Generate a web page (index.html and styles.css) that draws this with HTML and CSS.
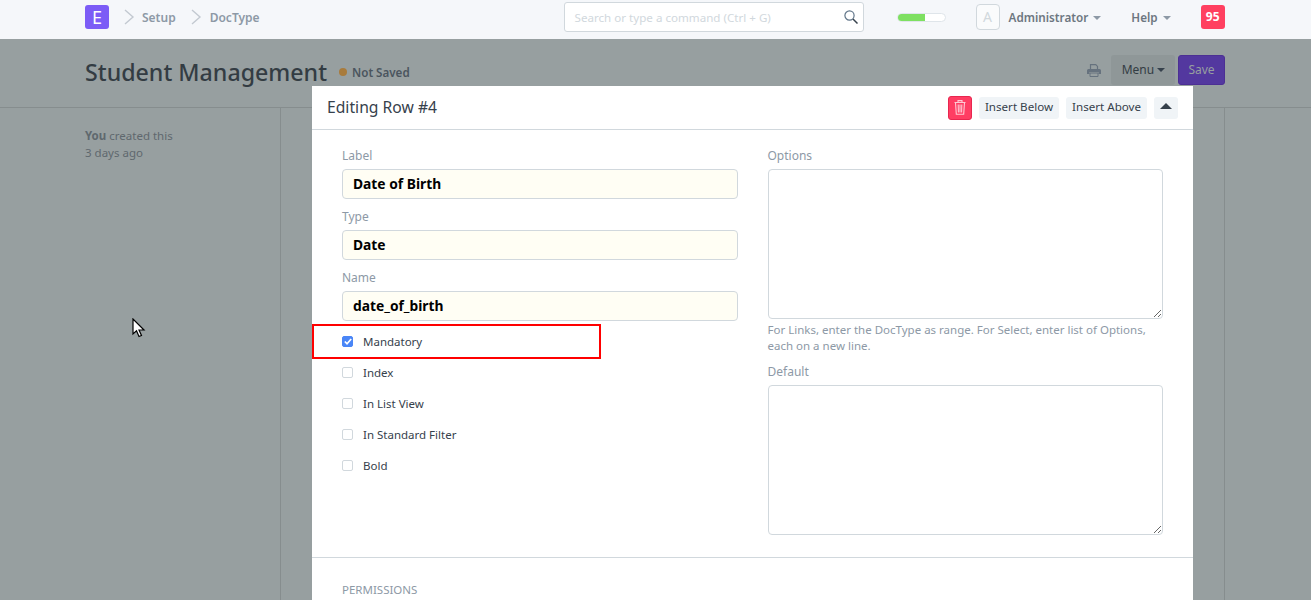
FILE: index.html
```html
<!DOCTYPE html>
<html lang="en">
<head>
  <meta charset="UTF-8">
  <title>Student Management</title>
  <link rel="stylesheet" href="styles.css">
</head>
<body>

<header class="navbar">
  <div class="logo">E</div>
  <svg class="crumb-arrow" width="12" height="16" viewBox="0 0 12 16"><path d="M2 1l8 7-8 7" fill="none" stroke="#c3c9d1" stroke-width="1.4"/></svg>
  <a class="crumb">Setup</a>
  <svg class="crumb-arrow" width="12" height="16" viewBox="0 0 12 16"><path d="M2 1l8 7-8 7" fill="none" stroke="#c3c9d1" stroke-width="1.4"/></svg>
  <a class="crumb crumb-last">DocType</a>

  <div class="search">
    <span class="search-text">Search or type a command (Ctrl + G)</span>
    <svg width="14" height="14" viewBox="0 0 14 14"><circle cx="5.500" cy="5.500" r="4.600" fill="none" stroke="#5f7488" stroke-width="1.200"/><path d="M9 9l4.500 4.500" stroke="#36414c" stroke-width="1.500"/></svg>
  </div>

  <div class="progress"><div class="progress-fill"></div></div>
  <div class="avatar">A</div>
  <a class="nav-link nav-admin">Administrator <span class="caret"></span></a>
  <a class="nav-link nav-help">Help <span class="caret"></span></a>
  <div class="badge">95</div>
</header>

<div class="page-head">
  <h1>Student Management</h1>
  <span class="dot"></span>
  <span class="status">Not Saved</span>
  <div class="page-actions">
    <svg width="14" height="13" viewBox="0 0 14 13"><path d="M3.500 5V.7h5.300l1.700 1.700V5" fill="none" stroke="#66727e" stroke-width="1.200"/><path d="M1.500 5h11A1.500 1.500 0 0 1 14 6.500V10h-2.500V8h-9v2H0V6.500A1.500 1.500 0 0 1 1.500 5z" fill="#66727e"/><path d="M3 9h8v3.500H3z" fill="none" stroke="#66727e" stroke-width="1"/></svg>
    <button class="btn-menu">Menu <span class="caret caret-dark"></span></button>
    <button class="btn-save">Save</button>
  </div>
</div>

<div class="page-body">
  <aside class="sidebar">
    <p><b>You</b> created this</p>
    <p>3 days ago</p>
  </aside>
  <div class="layout-main"></div>
</div>

<div class="modal">
  <div class="modal-head">
    <h4>Editing Row #4</h4>
    <button class="btn-delete">
      <svg width="12" height="15" viewBox="0 0 12 15"><path d="M4 2V.6h4V2 M.5 2.500h11 M1.500 2.500l.8 11.800h7.400l.8-11.800 M4.200 4.500l.2 8 M6 4.500v8 M7.800 4.500l-.2 8" fill="none" stroke="#ffc9d4" stroke-width="1.100"/></svg>
    </button>
    <button class="btn-light">Insert Below</button>
    <button class="btn-light">Insert Above</button>
    <button class="btn-light btn-up"><span class="caret-up"></span></button>
  </div>

  <div class="form-columns">
    <div class="form-col">
      <label class="field-label">Label</label>
      <input class="field-input" type="text" value="Date of Birth">
      <label class="field-label">Type</label>
      <input class="field-input" type="text" value="Date">
      <label class="field-label">Name</label>
      <input class="field-input" type="text" value="date_of_birth">

      <div class="checks">
        <div class="check">
          <span class="box box-on"><svg width="8" height="7" viewBox="0 0 8 7"><path d="M.8 3.500l2.200 2.200L7.200 1" fill="none" stroke="#fff" stroke-width="1.700"/></svg></span>
          Mandatory
        </div>
        <div class="check"><span class="box"></span>Index</div>
        <div class="check"><span class="box"></span>In List View</div>
        <div class="check"><span class="box"></span>In Standard Filter</div>
        <div class="check"><span class="box"></span>Bold</div>
      </div>
    </div>

    <div class="form-col">
      <label class="field-label">Options</label>
      <textarea class="field-area"></textarea>
      <p class="help">For Links, enter the DocType as range. For Select, enter list of Options, each on a new line.</p>
      <label class="field-label label-default">Default</label>
      <textarea class="field-area"></textarea>
    </div>
  </div>

  <div class="section-title">PERMISSIONS</div>
  <div class="highlight"></div>
</div>

<svg class="cursor" width="14" height="20" viewBox="0 0 14 20"><path d="M1 1v15l3.500-3.200L7 18.500l2.500-1-2.500-5.500h5z" fill="#fff" stroke="#000" stroke-width="1.200"/></svg>

</body>
</html>
```

FILE: styles.css
```css
* {
  box-sizing: border-box;
}
html, body {
  height: 600px;
  overflow: hidden;
}
body {
  font-family: "Noto Sans", sans-serif;
  background: #979fa0;
  color: #36414c;
  margin: 0;
  padding: 0;
  position: relative;
}
.navbar {
  display: flex;
  align-items: center;
  height: 39px;
  padding: 0 0 5px 85px;
  background: #f5f7fa;
  font-size: 12px;
  font-weight: 600;
}
.logo {
  width: 24px;
  height: 24px;
  border-radius: 3px;
  background: #7c5cf6;
  color: #fff;
  font-size: 18px;
  font-weight: 400;
  text-align: center;
  line-height: 24px;
}
.crumb-arrow {
  margin-left: 14px;
}
.crumb {
  margin-left: 7px;
  color: #8d99a6;
}
.crumb-last {
  margin-left: 8px;
}
.search {
  display: flex;
  align-items: center;
  justify-content: space-between;
  width: 300px;
  height: 30px;
  margin-left: 304px;
  padding: 0 5px 0 10px;
  background: #fff;
  border: 1px solid #d1d8dd;
  border-radius: 3px;
}
.search-text {
  color: #d1d8dd;
  font-size: 11.600px;
  font-weight: 400;
}
.progress {
  width: 49px;
  height: 9px;
  margin-left: 33px;
  background: #fff;
  border: 1px solid #dfe5ea;
  border-radius: 5px;
  overflow: hidden;
}
.progress-fill {
  width: 58%;
  height: 100%;
  background: #7ee061;
}
.avatar {
  width: 24px;
  height: 26px;
  margin-left: 30px;
  border: 1px solid #d1d8dd;
  border-radius: 4px;
  background: #fafbfc;
  color: #d1d8dd;
  font-size: 14px;
  font-weight: 400;
  text-align: center;
  line-height: 24px;
}
.nav-link {
  font-size: 11.700px;
  color: #6c7680;
}
.nav-admin {
  margin-left: 9px;
}
.nav-help {
  margin-left: 30px;
}
.caret {
  display: inline-block;
  margin-left: 2px;
  vertical-align: 2px;
  border-top: 4px solid #8d99a6;
  border-left: 4px solid transparent;
  border-right: 4px solid transparent;
}
.caret-dark {
  margin-left: 0;
  border-top-color: #36414c;
}
.badge {
  width: 24px;
  height: 24px;
  margin-left: 30px;
  background: #ff4060;
  border-radius: 3px;
  color: #fff;
  font-weight: 700;
  text-align: center;
  line-height: 24px;
}
.page-head {
  display: flex;
  align-items: center;
  height: 69px;
  padding: 0 86px 2px 85px;
  border-bottom: 1px solid #868d8e;
}
.page-head h1 {
  margin: 0;
  font-size: 23.200px;
  font-weight: 500;
  color: #333c43;
}
.dot {
  width: 8px;
  height: 8px;
  margin-left: 12px;
  border-radius: 50%;
  background: #a87b3c;
}
.status {
  margin-left: 5px;
  font-size: 11.600px;
  font-weight: 600;
  color: #4b555e;
}
.page-actions {
  display: flex;
  align-items: center;
  margin-left: auto;
  margin-top: -4px;
}
.btn-menu {
  width: 64px;
  height: 30px;
  margin-left: 10px;
  padding: 0 0 2px 1px;
  border: none;
  border-radius: 3px;
  background: #8f9798;
  color: #333c43;
  font: 12px "Noto Sans", sans-serif;
}
.btn-save {
  width: 47px;
  height: 30px;
  margin-left: 3px;
  padding: 0 0 2px;
  border: 1px solid #4c2f94;
  border-radius: 3px;
  background: #53389f;
  color: #979fa0;
  font: 12px "Noto Sans", sans-serif;
}
.page-body {
  display: flex;
  height: 492px;
}
.sidebar {
  width: 281px;
  padding: 19px 0 0 85px;
  border-right: 1px solid #868d8e;
  font-size: 11.500px;
  color: #5f686e;
}
.sidebar p {
  margin: 0;
  line-height: 17px;
}
.layout-main {
  width: 944px;
  border-right: 1px solid #868d8e;
}
.modal {
  position: absolute;
  top: 86px;
  left: 312px;
  width: 881px;
  height: 514px;
  background: #fff;
}
.modal-head {
  display: flex;
  align-items: center;
  gap: 7px;
  height: 44px;
  padding: 0 15px 0 15px;
  border-bottom: 1px solid #d1d8dd;
}
.modal-head h4 {
  flex: 1;
  margin: -2px 0 0;
  font-size: 15.700px;
  font-weight: 400;
  color: #36414c;
}
.btn-delete {
  display: flex;
  align-items: center;
  justify-content: center;
  width: 24px;
  height: 24px;
  padding: 0;
  border: 1px solid #e8264f;
  border-radius: 3px;
  background: #ff3d63;
}
.btn-light {
  height: 22px;
  padding: 0 6px 2px;
  border: none;
  border-radius: 3px;
  background: #f0f4f7;
  color: #36414c;
  font: 11.600px "Noto Sans", sans-serif;
}
.btn-up {
  width: 24px;
  padding: 0;
}
.caret-up {
  display: inline-block;
  vertical-align: 3px;
  border-bottom: 6px solid #36414c;
  border-left: 6px solid transparent;
  border-right: 6px solid transparent;
}
.form-columns {
  display: flex;
  gap: 30px;
  height: 428px;
  padding: 18px 30px 0;
  border-bottom: 1px solid #d1d8dd;
}
.form-col {
  flex: 1;
}
.field-label {
  display: block;
  height: 15px;
  margin-bottom: 6px;
  font-size: 12px;
  line-height: 15px;
  color: #8d99a6;
}
.field-input {
  display: block;
  width: 100%;
  height: 30px;
  margin-bottom: 10px;
  padding: 0 10px 2px;
  background: #fffef4;
  border: 1px solid #d1d8dd;
  border-radius: 4px;
  color: #000;
  font: 700 13.800px "Noto Sans", sans-serif;
}
.checks {
  margin-top: -5px;
}
.check {
  display: flex;
  align-items: center;
  height: 31px;
  font-size: 11.500px;
  color: #36414c;
}
.box {
  display: flex;
  align-items: center;
  justify-content: center;
  width: 11px;
  height: 11px;
  margin-right: 10px;
  background: #fff;
  border: 1px solid #d1d8dd;
  border-radius: 2px;
}
.box-on {
  background: #4a86f7;
  border-color: #4a86f7;
}
.field-area {
  display: block;
  width: 100%;
  height: 150px;
  background: #fff;
  border: 1px solid #d1d8dd;
  border-radius: 4px;
}
.help {
  margin: 3px 0 0;
  font-size: 11.500px;
  line-height: 16px;
  color: #8d99a6;
}
.label-default {
  margin-top: 10px;
}
.section-title {
  margin: 24px 30px 0;
  font-size: 11.500px;
  color: #8d99a6;
}
.highlight {
  position: absolute;
  top: 238px;
  left: 0;
  width: 289px;
  height: 35px;
  border: 2px solid #f00;
}
.cursor {
  position: absolute;
  top: 318px;
  left: 132px;
}
```
